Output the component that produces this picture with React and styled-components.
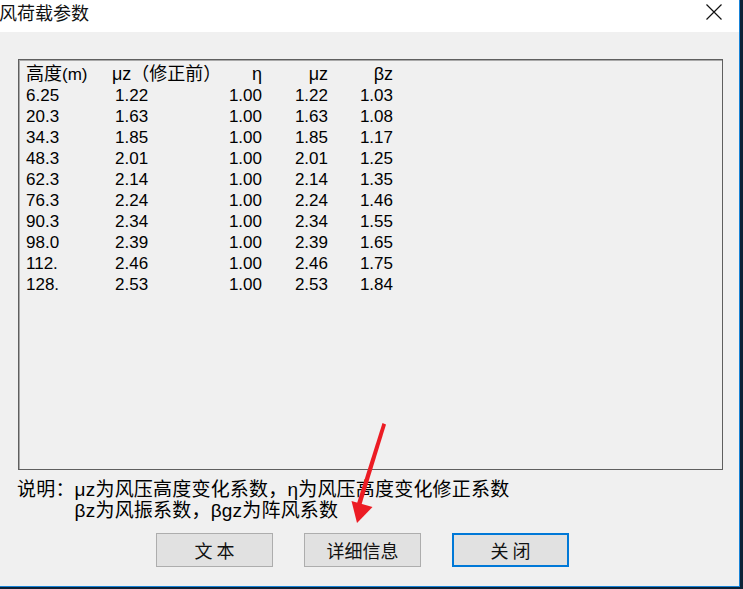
import styled, { createGlobalStyle } from "styled-components";

const rows = [
    ["6.25", "1.22", "1.00", "1.22", "1.03"],
    ["20.3", "1.63", "1.00", "1.63", "1.08"],
    ["34.3", "1.85", "1.00", "1.85", "1.17"],
    ["48.3", "2.01", "1.00", "2.01", "1.25"],
    ["62.3", "2.14", "1.00", "2.14", "1.35"],
    ["76.3", "2.24", "1.00", "2.24", "1.46"],
    ["90.3", "2.34", "1.00", "2.34", "1.55"],
    ["98.0", "2.39", "1.00", "2.39", "1.65"],
    ["112.", "2.46", "1.00", "2.46", "1.75"],
    ["128.", "2.53", "1.00", "2.53", "1.84"],
];

const App = () => {
    return (
        <Screen>
            <GlobalStyle />
            <Dialog>
                <TitleBar>
                    <Title>风荷载参数</Title>
                    <CloseX width="16" height="16" viewBox="0 0 16 16">
                        <path d="M0.5 0.5 L15.5 15.5 M15.5 0.5 L0.5 15.5" stroke="#111" strokeWidth="1.2" fill="none" />
                    </CloseX>
                </TitleBar>
                <Body>
                    <ListBox>
                        <Grid>
                            <Head>高度<Small>(m)</Small></Head>
                            <Head>μz（修正前）</Head>
                            <Head $right>η</Head>
                            <Head $right>μz</Head>
                            <Head $right>βz</Head>
                            {rows.map((r) => (
                                r.map((v, i) => (
                                    <Cell key={r[0] + i} $right={i > 1} $indent={i === 1}>{v}</Cell>
                                ))
                            ))}
                        </Grid>
                    </ListBox>
                    <Note>
                        <span>说明：</span>
                        <NoteLines>
                            <div>μz为风压高度变化系数，η为风压高度变化修正系数</div>
                            <div>βz为风振系数，βgz为阵风系数</div>
                        </NoteLines>
                    </Note>
                    <Buttons>
                        <Button>文 本</Button>
                        <Button>详细信息</Button>
                        <Button $primary>关 闭</Button>
                    </Buttons>
                </Body>
            </Dialog>
            <Arrow width="743" height="589" viewBox="0 0 743 589">
                <path d="M382.5 423 L386 424.5 L361 506 L356.5 505 Z" fill="#ec1c24" />
                <path d="M357 523 L351.5 501 L372.5 507 Z" fill="#ec1c24" />
            </Arrow>
        </Screen>
    );
};

const GlobalStyle = createGlobalStyle`
    html, body {
        margin: 0;
        padding: 0;
        background: #0d2236;
    }
    * {
        box-sizing: border-box;
    }
`;

const Screen = styled.div`
    position: relative;
    width: 743px;
    height: 589px;
    overflow: hidden;
    background: #0d2236;
    font-family: "Liberation Sans", "Noto Sans CJK SC", sans-serif;
    color: #000;
`;

const Dialog = styled.div`
    width: 740px;
    height: 587px;
    background: #f0f0f0;
    border-right: 1px solid #1883d7;
    border-bottom: 1px solid #1883d7;
    display: flex;
    flex-direction: column;
`;

const TitleBar = styled.div`
    height: 32px;
    background: #fff;
    display: flex;
    align-items: flex-start;
    justify-content: space-between;
    padding: 2px 17px 0 0;
`;

const Title = styled.div`
    margin-left: -1px;
    font-family: "Noto Sans CJK SC", sans-serif;
    font-size: 18px;
    line-height: 21px;
    color: #111;
`;

const CloseX = styled.svg`
    margin-top: 2px;
`;

const Body = styled.div`
    flex: 1;
    display: flex;
    flex-direction: column;
    padding: 27px 0 0 18px;
`;

const ListBox = styled.div`
    width: 705px;
    height: 411px;
    border: 1px solid #5f5f5f;
    box-shadow: inset 1px 1px 0 #a9a9a9;
    padding: 4px 0 0 7px;
`;

const Grid = styled.div`
    display: grid;
    grid-template-columns: 86px 88px 62px 66px 65px;
    grid-auto-rows: 21px;
    font-size: 17px;
    line-height: 21px;
`;

const Head = styled.div`
    white-space: nowrap;
    font-size: 18px;
    text-align: ${(p) => (p.$right ? "right" : "left")};
`;

const Small = styled.span`
    font-size: 17px;
`;

const Cell = styled.div`
    white-space: nowrap;
    text-align: ${(p) => (p.$right ? "right" : "left")};
    padding-left: ${(p) => (p.$indent ? "3px" : "0")};
`;

const Note = styled.div`
    display: flex;
    margin: 9px 0 0 -1px;
    font-size: 19px;
    line-height: 21px;
    letter-spacing: 0.2px;
    font-family: "Liberation Sans", "Noto Sans CJK SC", sans-serif;
`;

const NoteLines = styled.div`
    display: flex;
    flex-direction: column;
`;

const Buttons = styled.div`
    display: flex;
    gap: 31px;
    margin: 12px 0 0 138px;
`;

const Button = styled.button`
    width: 117px;
    height: 34px;
    background: #e1e1e1;
    border: ${(p) => (p.$primary ? "2px solid #0078d7" : "1px solid #adadad")};
    font-family: "Noto Sans CJK SC", sans-serif;
    font-size: 18px;
    color: #111;
    padding: 0;
`;

const Arrow = styled.svg`
    position: absolute;
    left: 0;
    top: 0;
    pointer-events: none;
`;

export default App;
